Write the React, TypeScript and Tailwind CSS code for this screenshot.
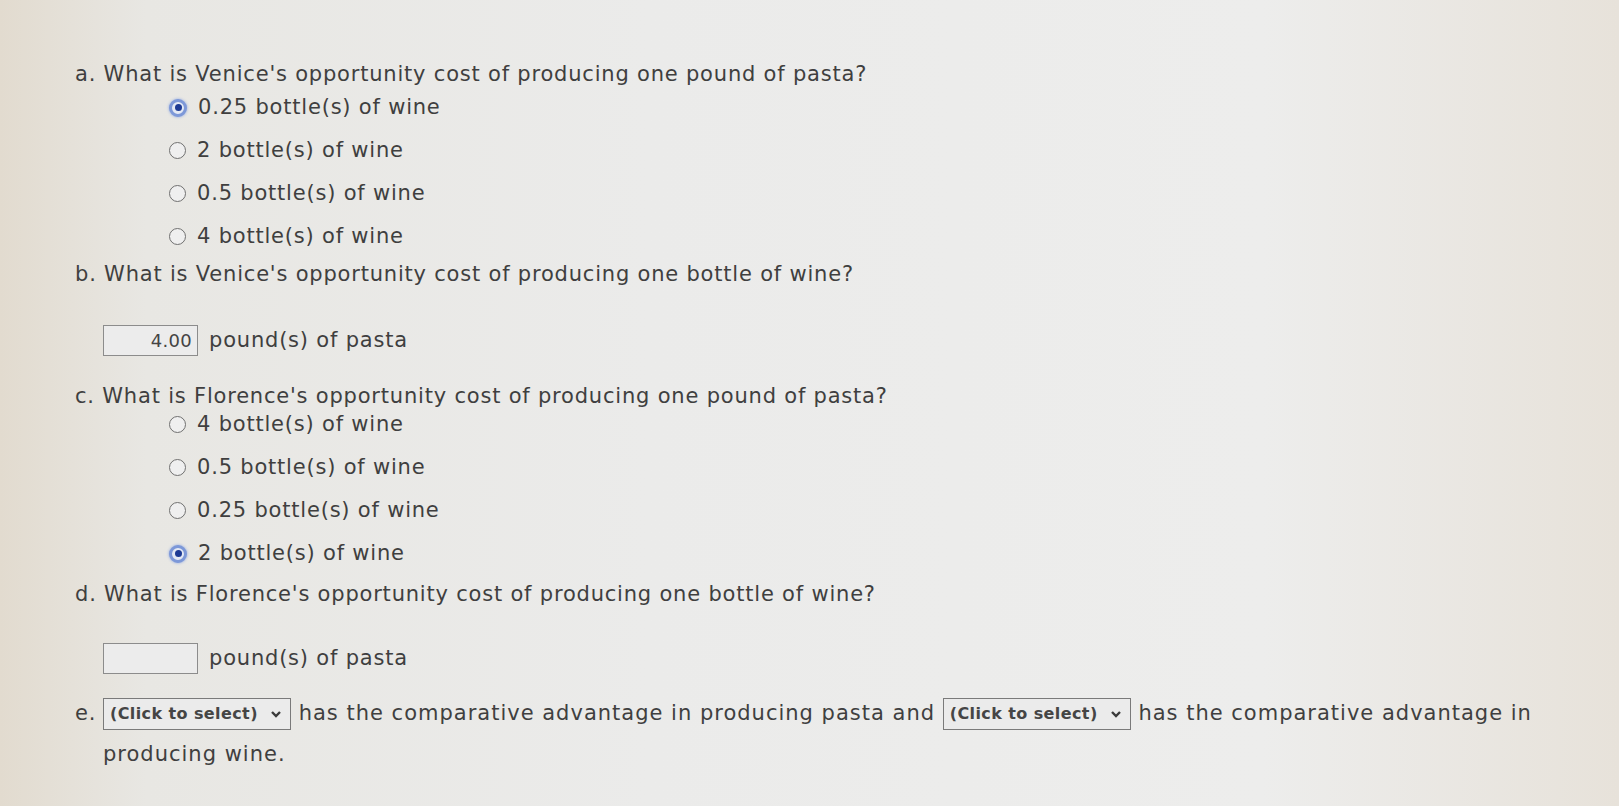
import React from "react";

const txt = "text-[21px] tracking-[0.8px] text-[#3f3f3f]";
const q = `${txt} leading-none`;

function Radio({ checked, label }: { checked?: boolean; label: string }) {
  return (
    <div className="flex h-[43px] items-center gap-[11px] pl-[94px]">
      {checked ? (
        <span className="flex h-[18px] w-[18px] items-center justify-center rounded-full border-[3px] border-[#7d98d8] bg-[#e4e9f4] shadow-[0_0_3px_#8aa4e2]">
          <span className="h-[7px] w-[7px] rounded-full bg-[#1d3a94]" />
        </span>
      ) : (
        <span className="h-[17px] w-[17px] rounded-full border-[1.5px] border-[#707070] bg-[#efefef]" />
      )}
      <span className={q}>{label}</span>
    </div>
  );
}

function NumBox({ value }: { value?: string }) {
  return (
    <div className="flex h-[31px] w-[95px] items-center justify-end border-[1.5px] border-[#8c8c8c] bg-[#ececec] px-[5px] text-[18px] tracking-[0.3px] text-[#444]">
      {value}
    </div>
  );
}

function Select() {
  return (
    <span className="inline-flex h-[32px] w-[188px] items-center justify-between border-[1.5px] border-[#7a7a7a] bg-[#ebebeb] pr-[8px] pl-[6px] align-middle text-[16px] leading-none font-bold tracking-[0.4px] text-[#454545]">
      <span>(Click to select)</span>
      <svg width="12" height="10" viewBox="0 0 12 10">
        <path d="M2 3 L6 7 L10 3" fill="none" stroke="#3a3a3a" strokeWidth="2.4" />
      </svg>
    </span>
  );
}

export default function App() {
  return (
    <div
      className="h-[806px] w-[1619px] overflow-hidden bg-[linear-gradient(90deg,#e2dbcf_0%,#e8e7e3_9%,#ebebea_40%,#ededec_78%,#e7e2da_100%)] pt-[59px] pl-[75px]"
      style={{ fontFamily: '"DejaVu Sans", Verdana, sans-serif' }}
    >
      <div className={`${q} flex h-[30px] items-center`}>a. What is Venice's opportunity cost of producing one pound of pasta?</div>
      <div className="-mt-[3px]">
        <Radio checked label="0.25 bottle(s) of wine" />
        <Radio label="2 bottle(s) of wine" />
        <Radio label="0.5 bottle(s) of wine" />
        <Radio label="4 bottle(s) of wine" />
      </div>

      <div className={`${q} mt-[1px] flex h-[30px] items-center`}>b. What is Venice's opportunity cost of producing one bottle of wine?</div>
      <div className="mt-[36px] flex items-center gap-[11px] pl-[28px]">
        <NumBox value="4.00" />
        <span className={q}>pound(s) of pasta</span>
      </div>

      <div className={`${q} mt-[25px] flex h-[30px] items-center`}>c. What is Florence's opportunity cost of producing one pound of pasta?</div>
      <div className="-mt-[8px]">
        <Radio label="4 bottle(s) of wine" />
        <Radio label="0.5 bottle(s) of wine" />
        <Radio label="0.25 bottle(s) of wine" />
        <Radio checked label="2 bottle(s) of wine" />
      </div>

      <div className={`${q} mt-[4px] flex h-[30px] items-center`}>d. What is Florence's opportunity cost of producing one bottle of wine?</div>
      <div className="mt-[34px] flex items-center gap-[11px] pl-[28px]">
        <NumBox />
        <span className={q}>pound(s) of pasta</span>
      </div>

      <div className="mt-[19px] flex">
        <span className={`${q} flex h-[41px] w-[28px] shrink-0 items-center`}>e.</span>
        <div className="text-[21px] leading-[41px] tracking-[1px] text-[#3f3f3f]">
          <Select /> has the comparative advantage in producing pasta and <Select /> has the comparative advantage in
          <br />
          producing wine.
        </div>
      </div>
    </div>
  );
}
